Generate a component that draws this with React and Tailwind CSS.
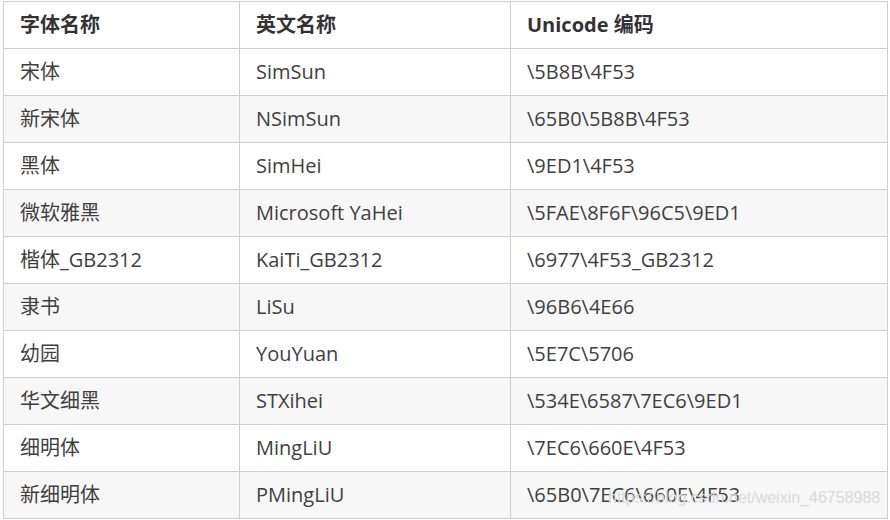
const rows = [
  ["宋体", "SimSun", "\\5B8B\\4F53"],
  ["新宋体", "NSimSun", "\\65B0\\5B8B\\4F53"],
  ["黑体", "SimHei", "\\9ED1\\4F53"],
  ["微软雅黑", "Microsoft YaHei", "\\5FAE\\8F6F\\96C5\\9ED1"],
  ["楷体_GB2312", "KaiTi_GB2312", "\\6977\\4F53_GB2312"],
  ["隶书", "LiSu", "\\96B6\\4E66"],
  ["幼园", "YouYuan", "\\5E7C\\5706"],
  ["华文细黑", "STXihei", "\\534E\\6587\\7EC6\\9ED1"],
  ["细明体", "MingLiU", "\\7EC6\\660E\\4F53"],
  ["新细明体", "PMingLiU", "\\65B0\\7EC6\\660E\\4F53"],
];

const cell = "flex items-center pl-4 border-r border-b border-[#cfcfcf]";

export default function App() {
  return (
    <div className="relative w-[890px] h-[520px] bg-white font-['Open_Sans','Noto_Sans_CJK_SC',sans-serif] text-[20px] text-[#3f3f3f]">
      <div className="absolute left-[3px] top-[1px] w-[885px] border-l border-t border-[#cfcfcf]">
        <div className="grid grid-cols-[236px_271px_377px] h-[47px] font-bold text-[#333]">
          <div className={cell}>字体名称</div>
          <div className={cell}>英文名称</div>
          <div className={cell}>Unicode 编码</div>
        </div>
        {rows.map((r, i) => (
          <div
            key={i}
            className={`grid grid-cols-[236px_271px_377px] h-[47px] ${
              i % 2 === 1 ? "bg-[#f7f7f7]" : "bg-white"
            }`}
          >
            <div className={cell}>{r[0]}</div>
            <div className={cell}>{r[1]}</div>
            <div className={cell}>{r[2]}</div>
          </div>
        ))}
      </div>
      <div className="absolute left-[608px] top-[486px] font-['Liberation_Sans',sans-serif] text-[16px] leading-[24px] text-[#dadada] whitespace-nowrap">
        https://blog.csdn.net/weixin_46758988
      </div>
    </div>
  );
}
